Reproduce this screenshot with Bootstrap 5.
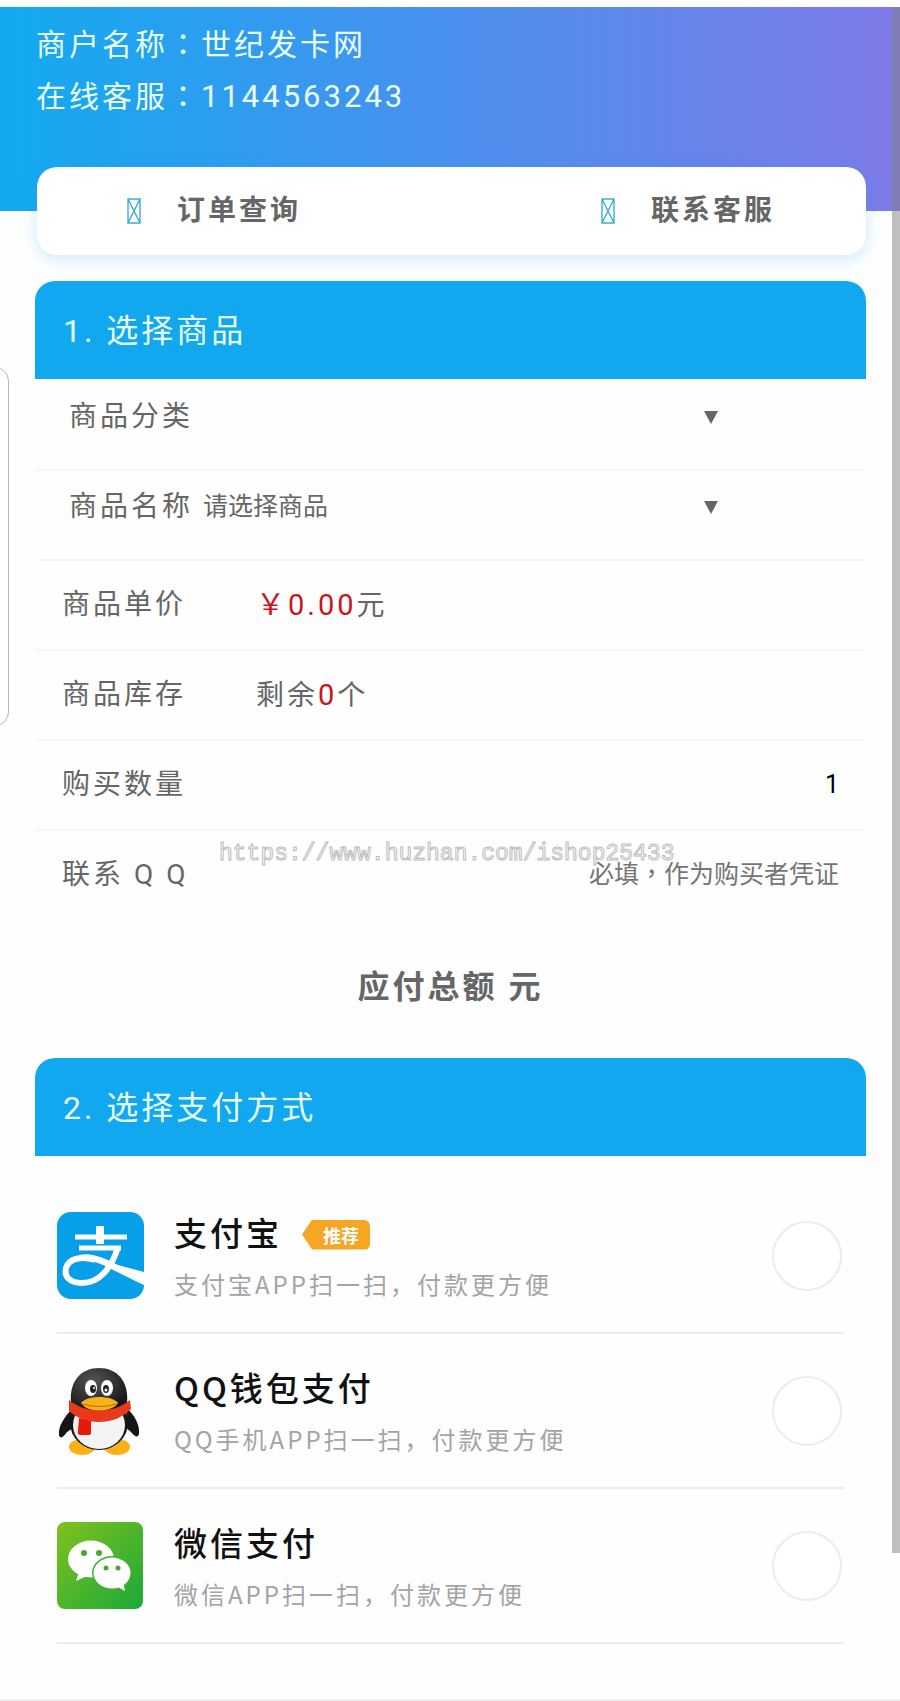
<!DOCTYPE html>
<html lang="zh-CN">
<head>
<meta charset="utf-8">
<meta name="viewport" content="width=device-width, initial-scale=1">
<title>世纪发卡网</title>
<link href="https://cdn.jsdelivr.net/npm/bootstrap@5.3.0/dist/css/bootstrap.min.css" rel="stylesheet">
<style>
  :root { --shop-blue: #12a8f0; --shop-text: #666; }
  body { font-family: Roboto, "Noto Sans CJK SC", sans-serif; font-size: 28px; letter-spacing: 3px; line-height: 42px; color: var(--shop-text); background: #fefefe; }
  .shop-page { padding-top: 7px; overflow: hidden; border-bottom: 2px solid #eee; }
  .shop-top { height: 204px; padding: 12px 36px; font-size: 30px; line-height: 52px; color: #e8ffff; background: linear-gradient(90deg, #12aaf0, #4a90ee 50%, #7e7ae8); }
  .wide-punct { font-family: "Noto Sans CJK TC", sans-serif; line-height: 1; }
  .shop-number { font-size: 31px; line-height: 1; }
  .quick-links { height: 88px; margin: -44px 34px 0 37px; padding: 0 91px 0 90px; border-radius: 20px; background: #fff; box-shadow: 0 4px 16px rgba(18, 168, 240, .22); }
  .quick-links a { gap: 36px; color: var(--shop-text); }
  .shop-section { margin: 26px 34px 0 35px; }
  .section-title { height: 98px; padding: 2px 28px 0; border-radius: 20px 20px 0 0; background: var(--shop-blue); color: #e8ffff; font-size: 32px; font-weight: 400; }
  .form-lines { padding-top: 2px; }
  .form-line { height: 90px; padding: 0 27px; border-bottom: 2px solid #f7f7f7; }
  .form-line:last-child { border-bottom-color: transparent; }
  .pick-line { gap: 10px; padding: 15px 148px 0 34px; }
  .line-label { width: 194px; }
  .line-field { border: 0; background: transparent; font-size: 25px; padding: 0; min-width: 0; outline-offset: 4px; }
  .line-field::placeholder { color: #757575; opacity: 1; font-family: "Noto Sans CJK TC", sans-serif; }
  .pick-line select { appearance: none; height: 42px; color: var(--shop-text); background: url("data:image/svg+xml,%3Csvg xmlns='http://www.w3.org/2000/svg' viewBox='0 0 14 13'%3E%3Cpath d='M0 0h14L7 13z' fill='%23666'/%3E%3C/svg%3E") no-repeat right center / 14px 13px; }
  .red-num { color: #c8161d; font-size: 29px; }
  .total-line { padding: 45px 0 50px; font-size: 32px; }
  .watermark { left: 219px; top: 838px; font: 23px/32px "Liberation Mono", monospace; letter-spacing: 0; color: #fff; -webkit-text-stroke: 1px #bcbcbc; pointer-events: none; }
  .pay-list { margin: 23px 22px 55px; font-family: "Noto Sans CJK SC", sans-serif; }
  .pay-row { height: 155px; border-bottom: 2px solid #ececec; gap: 30px; cursor: pointer; }
  .pay-text { padding-top: 5px; }
  .pay-name { font-size: 33px; line-height: 51px; font-weight: 500; color: #111; }
  .pay-note { font-size: 24px; line-height: 51px; color: #a3a3a8; }
  .pay-tag { width: 68px; height: 30px; margin-left: 20px; padding-left: 10px; color: #fff; background: #f5a623; border-radius: 6px; font-size: 18px; line-height: 30px; letter-spacing: 0; font-weight: 700; clip-path: polygon(0 50%, 10px 0, 100% 0, 100% 100%, 10px 100%); }
  .pay-radio { appearance: none; width: 70px; height: 70px; margin-right: 2px; border: 2px solid #ececec; border-radius: 50%; background: #fff; }
  .pay-radio:checked { border: 20px solid var(--shop-blue); }
  .side-tab { left: -20px; top: 367px; width: 29px; height: 359px; border: 1px solid #b5b5b5; border-radius: 14px; background: #fff; }
  .scroll-thumb { right: 0; top: 7px; width: 8px; height: 1546px; background: rgba(128, 128, 128, .5); }
</style>
</head>
<body class="position-relative">
<main class="shop-page">
  <header class="shop-top">
    <div>商户名称<span class="wide-punct" lang="zh-TW">：</span>世纪发卡网</div>
    <div>在线客服<span class="wide-punct" lang="zh-TW">：</span><span class="shop-number">1144563243</span></div>
  </header>
  <nav class="quick-links position-relative d-flex align-items-center justify-content-between fw-bold">
    <a class="d-flex align-items-center text-decoration-none" href="#orders">
      <svg width="14" height="26" viewBox="0 0 14 26" fill="none" stroke="#3bacd2" aria-hidden="true"><path stroke-width="1.4" d="M1 1h12v24H1zL13 25M13 1 1 25"/></svg>订单查询</a>
    <a class="d-flex align-items-center text-decoration-none" href="#service">
      <svg width="14" height="26" viewBox="0 0 14 26" fill="none" stroke="#3bacd2" aria-hidden="true"><path stroke-width="1.4" d="M1 1h12v24H1zL13 25M13 1 1 25"/></svg>联系客服</a>
  </nav>

  <form>
    <section class="shop-section">
      <h2 class="section-title d-flex align-items-center m-0">1. 选择商品</h2>
      <div class="form-lines">
        <div class="form-line pick-line d-flex align-items-start">
          <label for="category">商品分类</label>
          <select id="category" class="line-field flex-grow-1"><option></option></select>
        </div>
        <div class="form-line pick-line d-flex align-items-start">
          <label for="product">商品名称</label>
          <select id="product" class="line-field flex-grow-1"><option>请选择商品</option></select>
        </div>
        <div class="form-line d-flex align-items-center">
          <span class="line-label">商品单价</span><span><span class="red-num">￥0.00</span>元</span>
        </div>
        <div class="form-line d-flex align-items-center">
          <span class="line-label">商品库存</span><span>剩余<span class="red-num">0</span>个</span>
        </div>
        <div class="form-line d-flex align-items-center">
          <label for="quantity" class="line-label">购买数量</label>
          <input id="quantity" class="line-field flex-grow-1 text-end text-black" type="text" inputmode="numeric" value="1">
        </div>
        <div class="form-line d-flex align-items-center">
          <label for="contact" class="line-label">联系 Q Q</label>
          <input id="contact" class="line-field flex-grow-1 text-end" type="text" lang="zh-TW" placeholder="必填，作为购买者凭证">
        </div>
      </div>
      <div class="total-line text-center fw-bold">应付总额 元</div>
    </section>

    <section class="shop-section mt-0">
      <h2 class="section-title d-flex align-items-center m-0">2. 选择支付方式</h2>
      <div class="pay-list">
        <label class="pay-row d-flex align-items-center">
          <svg width="87" height="87" viewBox="0 0 87 87" aria-hidden="true">
            <rect width="87" height="87" rx="14" fill="#069fe8"/>
            <g fill="none" stroke="#fff">
              <path stroke-width="8" d="M43 14v18"/>
              <path stroke-width="5" d="M18 25h52M22 36h42"/>
              <path stroke-width="6" d="M61 35C55 55 43 71 25 71 12 71 7 64 9 56c3-10 16-12 29-8"/>
            </g>
            <path fill="#fff" d="M22 43c13-3 25 3 39 10l26 7v13C70 65 56 58 46 53c-9-4-15-5-24-5z"/>
          </svg>
          <span class="pay-text flex-grow-1">
            <span class="pay-name d-flex align-items-center">支付宝<span class="pay-tag text-center mt-1">推荐</span></span>
            <span class="pay-note d-block">支付宝APP扫一扫，付款更方便</span>
          </span>
          <input class="pay-radio" type="radio" name="pay" value="alipay">
        </label>
        <label class="pay-row d-flex align-items-center">
          <svg width="87" height="90" viewBox="0 0 87 90" aria-hidden="true">
            <defs><radialGradient id="qqHead" cx=".4" cy=".3" r=".7"><stop offset="0" stop-color="#555"/><stop offset="1" stop-color="#151515"/></radialGradient></defs>
            <ellipse cx="25" cy="81" rx="13" ry="8" fill="#fbb01a"/><ellipse cx="60" cy="81" rx="13" ry="8" fill="#fbb01a"/>
            <path fill="#151515" d="M16 42C8 50 1 60 2 69c1 4 4 3 8-3l6-4zM70 42c8 8 13 17 12 26-1 4-4 3-8-2l-6-5z"/>
            <ellipse cx="42" cy="57" rx="29" ry="27" fill="#151515"/>
            <ellipse cx="42" cy="59" rx="26" ry="24" fill="#f3f3f3"/>
            <path fill="url(#qqHead)" d="M14 37C12 15 24 2 42 2s30 13 28 35c-7 12-48 12-56 0z"/>
            <path fill="#e8391c" d="M12 34c17 14 44 14 61 0l1 9c-9 9-20 13-32 13-12 0-22-4-30-11z"/>
            <path fill="#e7190d" d="M22 52l12 3v12q0 2-3 2h-7q-4 0-3-4z"/>
            <ellipse cx="34" cy="22" rx="6" ry="8" fill="#fff"/><ellipse cx="50" cy="22" rx="6" ry="8" fill="#fff"/>
            <ellipse cx="36" cy="23" rx="3" ry="4" fill="#222"/><ellipse cx="49" cy="23" rx="3" ry="4" fill="#222"/>
            <circle cx="37" cy="22" r="1" fill="#fff"/><circle cx="49" cy="24" r="1.500" fill="#fff"/>
            <path fill="#fbb01a" d="M24 37c6-8 31-8 37 0-5 9-30 11-37 0z"/>
            <path d="M25 38q18 5 35 0" fill="none" stroke="#a8700c"/>
          </svg>
          <span class="pay-text flex-grow-1">
            <span class="pay-name d-block">QQ钱包支付</span>
            <span class="pay-note d-block">QQ手机APP扫一扫，付款更方便</span>
          </span>
          <input class="pay-radio" type="radio" name="pay" value="qq">
        </label>
        <label class="pay-row d-flex align-items-center">
          <svg width="87" height="87" viewBox="0 0 87 87" aria-hidden="true">
            <defs><linearGradient id="wxBg" x1="0" y1="0" x2="1" y2="1"><stop offset="0" stop-color="#80c11e"/><stop offset="1" stop-color="#1aa93a"/></linearGradient></defs>
            <rect width="86" height="87" rx="8" fill="url(#wxBg)"/>
            <ellipse cx="34" cy="37" rx="23" ry="18.500" fill="#fff"/><path fill="#fff" d="M22 50l-3 9 11-5z"/>
            <ellipse cx="55" cy="51" rx="20" ry="17" fill="#3eb030"/>
            <ellipse cx="55" cy="51" rx="18.500" ry="15.500" fill="#fff"/><path fill="#fff" d="M59 64l9 5-2-10z"/>
            <g fill="#4aa92c"><circle cx="27" cy="31" r="3"/><circle cx="42" cy="31" r="3"/><circle cx="49" cy="46" r="2.500"/><circle cx="61" cy="46" r="2.500"/></g>
          </svg>
          <span class="pay-text flex-grow-1">
            <span class="pay-name d-block">微信支付</span>
            <span class="pay-note d-block">微信APP扫一扫，付款更方便</span>
          </span>
          <input class="pay-radio" type="radio" name="pay" value="wechat">
        </label>
      </div>
    </section>
  </form>
</main>
<div class="watermark position-absolute">https://www.huzhan.com/ishop25433</div>
<div class="side-tab position-absolute"></div>
<div class="scroll-thumb position-absolute"></div>
<script src="https://cdn.jsdelivr.net/npm/bootstrap@5.3.0/dist/js/bootstrap.bundle.min.js"></script>
</body>
</html>
